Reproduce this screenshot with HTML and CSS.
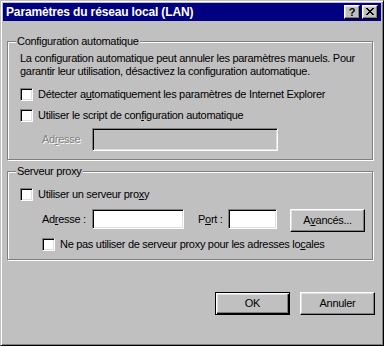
FILE: index.html
```html
<!DOCTYPE html>
<html lang="fr">
<head>
<meta charset="utf-8">
<title>Paramètres du réseau local (LAN)</title>
<link rel="stylesheet" href="styles.css">
</head>
<body>
<div class="window">
  <div class="titlebar">
    <span class="title">Paramètres du réseau local (LAN)</span>
    <div class="tbtns">
      <div class="tbtn help">?</div>
      <div class="tbtn close">
        <svg width="8" height="7" viewBox="0 0 8 7" shape-rendering="crispEdges">
          <path d="M0 0h2v1H0zM6 0h2v1H6zM1 1h2v1H1zM5 1h2v1H5zM2 2h4v1H2zM3 3h2v1H3zM2 4h4v1H2zM1 5h2v1H1zM5 5h2v1H5zM0 6h2v1H0zM6 6h2v1H6z" fill="#000"/>
        </svg>
      </div>
    </div>
  </div>
  <div class="body">
    <div class="group g1">
      <span class="legend">Configuration automatique</span>
      <p class="desc">La configuration automatique peut annuler les paramètres manuels. Pour<br>garantir leur utilisation, désactivez la configuration automatique.</p>
      <div class="check-row r1"><span class="cb"></span><span class="lbl">Détecter a<u>u</u>tomatiquement les paramètres de Internet Explorer</span></div>
      <div class="check-row r2"><span class="cb"></span><span class="lbl">Utiliser le script de con<u>f</u>iguration automatique</span></div>
      <div class="field-row script-row">
        <span class="flabel disabled">Ad<u>r</u>esse</span>
        <span class="input input-disabled script-input"></span>
      </div>
    </div>
    <div class="group g2">
      <span class="legend">Serveur proxy</span>
      <div class="check-row"><span class="cb"></span><span class="lbl">Utiliser un serveur pro<u>x</u>y</span></div>
      <div class="proxy-row">
        <span class="flabel tall">Ad<u>r</u>esse :</span>
        <span class="input addr-input"></span>
        <span class="flabel tall port-label">P<u>o</u>rt :</span>
        <span class="input port-input"></span>
        <div class="btn adv-btn">A<u>v</u>ancés...</div>
      </div>
      <div class="check-row r3"><span class="cb"></span><span class="lbl">Ne pas utiliser de serveur proxy pour les adresses lo<u>c</u>ales</span></div>
    </div>
    <div class="buttons">
      <div class="btn default">OK</div>
      <div class="btn">Annuler</div>
    </div>
  </div>
</div>
</body>
</html>
```

FILE: styles.css
```css
* {
  box-sizing: border-box;
  margin: 0;
  padding: 0;
}

html, body {
  width: 384px;
  height: 346px;
  overflow: hidden;
}

body {
  background: #c0c0c0;
  font-family: "Liberation Sans", Arial, sans-serif;
  font-size: 11px;
  letter-spacing: -0.3px;
  line-height: 13px;
  color: #000;
}

u {
  text-decoration: underline;
  text-underline-offset: 1px;
}

.window {
  width: 384px;
  height: 346px;
  background: #c0c0c0;
  border: 1px solid;
  border-color: #c0c0c0 #000 #000 #c0c0c0;
  box-shadow: inset 1px 1px #fff, inset -1px -1px #808080;
  padding: 2px;
  display: flex;
  flex-direction: column;
}

.titlebar {
  height: 18px;
  background: #000080;
  display: flex;
  align-items: flex-start;
  padding-left: 3px;
  flex: none;
}

.title {
  color: #fff;
  font-weight: bold;
  font-size: 12px;
  line-height: 18px;
  letter-spacing: -0.15px;
  white-space: nowrap;
}

.tbtns {
  margin-left: auto;
  display: flex;
  gap: 2px;
  padding-top: 2px;
  padding-right: 3px;
}

.tbtn {
  width: 16px;
  height: 14px;
  background: #c0c0c0;
  border: 1px solid;
  border-color: #fff #000 #000 #fff;
  box-shadow: inset -1px -1px #808080, inset 1px 1px #dfdfdf;
}

.tbtn.help {
  font-weight: bold;
  font-size: 11px;
  line-height: 12px;
  text-align: center;
  letter-spacing: 0;
}

.tbtn.close {
  padding: 2px 0 0 3px;
}

.tbtn.close svg {
  display: block;
}

.body {
  display: flex;
  flex-direction: column;
}

.group {
  position: relative;
  margin-left: 4px;
  width: 366px;
  border: 1px solid #808080;
  box-shadow: inset 1px 1px #fff, 1px 1px #fff;
}

.legend {
  position: absolute;
  top: -7px;
  left: 8px;
  padding: 0 1px;
  background: #c0c0c0;
  white-space: nowrap;
  line-height: 13px;
}

.g1 {
  margin-top: 20px;
  height: 119px;
  padding: 10px 0 0 12px;
}

.g2 {
  margin-top: 11px;
  height: 89px;
  padding: 16px 0 0 12px;
}

.desc {
  white-space: nowrap;
  line-height: 13px;
}

.check-row {
  display: flex;
  align-items: center;
  gap: 5px;
  height: 13px;
  white-space: nowrap;
}

.r1 { margin-top: 10px; }
.r2 { margin-top: 8px; }
.r3 { margin-top: 6px; padding-left: 22px; }

.cb {
  flex: none;
  width: 13px;
  height: 13px;
  background: #fff;
  border: 1px solid;
  border-color: #808080 #fff #fff #808080;
  box-shadow: inset 1px 1px #000, inset -1px -1px #dfdfdf;
}

.lbl {
  line-height: 13px;
  margin-top: -1px;
}

.field-row {
  display: flex;
  align-items: center;
}

.script-row {
  margin-top: 6px;
  padding-left: 22px;
}

.flabel {
  width: 50px;
  flex: none;
  white-space: nowrap;
}

.flabel.tall {
  line-height: 20px;
  height: 20px;
}

.disabled {
  color: #808080;
  text-shadow: 1px 1px 0 #fff;
}

.input {
  flex: none;
  display: block;
  background: #fff;
  border: 1px solid;
  border-color: #808080 #fff #fff #808080;
  box-shadow: inset 1px 1px #000, inset -1px -1px #dfdfdf;
  height: 20px;
}

.input-disabled {
  background: #c0c0c0;
}

.script-input {
  width: 186px;
  height: 23px;
}

.proxy-row {
  display: flex;
  align-items: flex-start;
  margin-top: 8px;
  padding-left: 22px;
}

.addr-input {
  width: 92px;
}

.port-label {
  width: 30px;
  margin-left: 14px;
}

.port-input {
  width: 49px;
}

.btn {
  flex: none;
  width: 75px;
  height: 23px;
  background: #c0c0c0;
  border: 1px solid;
  border-color: #fff #000 #000 #fff;
  box-shadow: inset -1px -1px #808080, inset 1px 1px #dfdfdf;
  display: flex;
  align-items: center;
  justify-content: center;
  white-space: nowrap;
  line-height: 13px;
}

.adv-btn {
  margin-left: 13px;
}

.btn.default {
  border: 1px solid #000;
  box-shadow: inset 1px 1px #fff, inset -1px -1px #000, inset -2px -2px #808080, inset 2px 2px #dfdfdf;
}

.buttons {
  display: flex;
  justify-content: flex-end;
  gap: 10px;
  margin-top: 32px;
  padding-right: 6px;
}
```
